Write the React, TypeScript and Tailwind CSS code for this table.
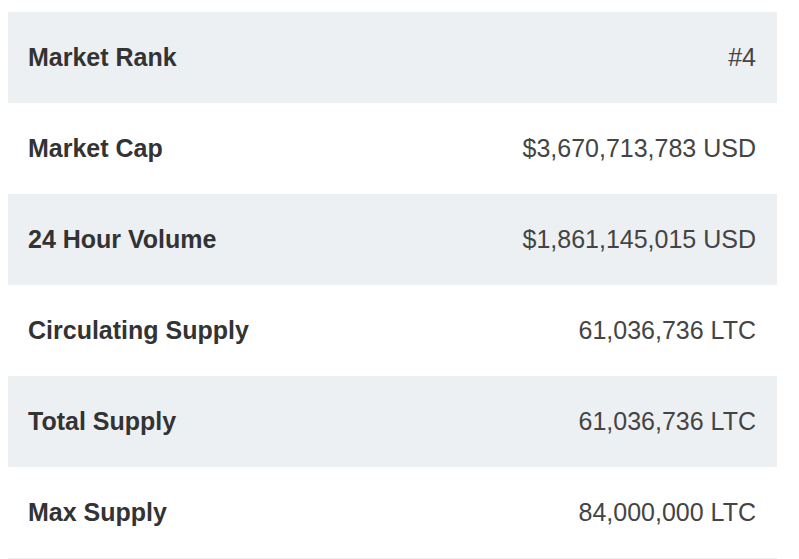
// Coin stats table — alternating rows
const rows = [
  { label: "Market Rank", value: "#4" },
  { label: "Market Cap", value: "$3,670,713,783 USD" },
  { label: "24 Hour Volume", value: "$1,861,145,015 USD" },
  { label: "Circulating Supply", value: "61,036,736 LTC" },
  { label: "Total Supply", value: "61,036,736 LTC" },
  { label: "Max Supply", value: "84,000,000 LTC" },
];

export default function App() {
  return (
    <div
      className="min-h-[559px] bg-white pt-[12px] pl-[8px]"
      style={{ fontFamily: '"Liberation Sans", Arial, sans-serif' }}
    >
      <div className="w-[769px] border-b border-[#eef0f3]">
        {rows.map((row, i) => (
          <div
            key={row.label}
            className={`flex h-[91px] items-center justify-between pl-[20px] pr-[21px] text-[25px] leading-none ${
              i % 2 === 0 ? "bg-[#edf0f3]" : "bg-white"
            }`}
          >
            <span className="font-bold text-[#333]">{row.label}</span>
            <span className="text-[#444]">{row.value}</span>
          </div>
        ))}
      </div>
    </div>
  );
}
